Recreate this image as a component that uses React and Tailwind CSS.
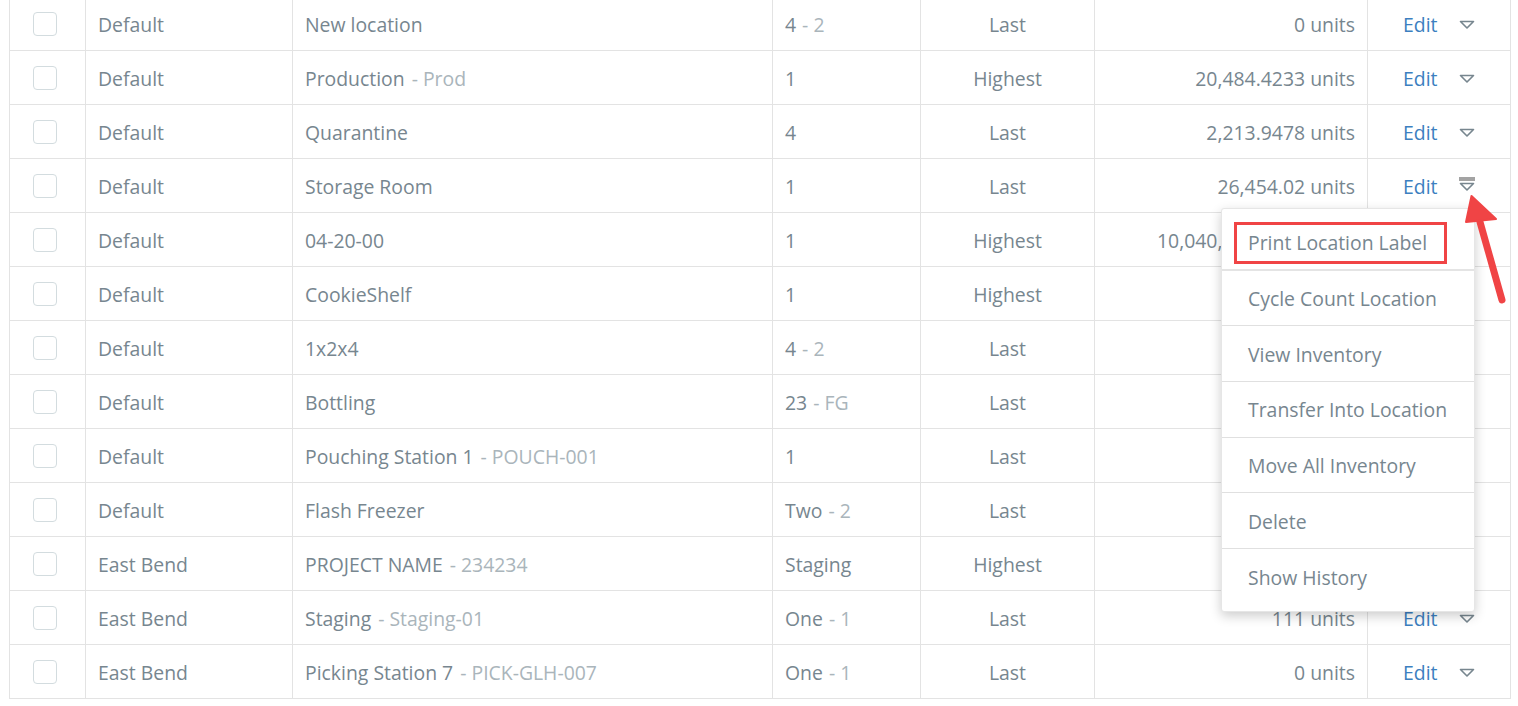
import React from 'react'

const rows = [
  { site: 'Default', name: 'New location', level: '4', sub: '2', pick: 'Last', qty: '0 units' },
  { site: 'Default', name: 'Production', code: 'Prod', level: '1', pick: 'Highest', qty: '20,484.4233 units' },
  { site: 'Default', name: 'Quarantine', level: '4', pick: 'Last', qty: '2,213.9478 units' },
  { site: 'Default', name: 'Storage Room', level: '1', pick: 'Last', qty: '26,454.02 units', active: true },
  { site: 'Default', name: '04-20-00', level: '1', pick: 'Highest', qty: '10,040,112.5531 units' },
  { site: 'Default', name: 'CookieShelf', level: '1', pick: 'Highest', qty: '312 units' },
  { site: 'Default', name: '1x2x4', level: '4', sub: '2', pick: 'Last', qty: '0 units' },
  { site: 'Default', name: 'Bottling', level: '23', sub: 'FG', pick: 'Last', qty: '48 units' },
  { site: 'Default', name: 'Pouching Station 1', code: 'POUCH-001', level: '1', pick: 'Last', qty: '0 units' },
  { site: 'Default', name: 'Flash Freezer', level: 'Two', sub: '2', pick: 'Last', qty: '0 units' },
  { site: 'East Bend', name: 'PROJECT NAME', code: '234234', level: 'Staging', pick: 'Highest', qty: '0 units' },
  { site: 'East Bend', name: 'Staging', code: 'Staging-01', level: 'One', sub: '1', pick: 'Last', qty: '111 units' },
  { site: 'East Bend', name: 'Picking Station 7', code: 'PICK-GLH-007', level: 'One', sub: '1', pick: 'Last', qty: '0 units' },
]

const menuItems = [
  'Print Location Label',
  'Cycle Count Location',
  'View Inventory',
  'Transfer Into Location',
  'Move All Inventory',
  'Delete',
  'Show History',
]

function Caret({ active }) {
  return (
    <div className="relative flex h-[14px] w-[16px] items-end">
      {active && <div className="absolute left-0 top-[-1px] h-[4px] w-[16px] bg-[#a3a3a3]"></div>}
      <svg width="16" height="10" viewBox="0 0 16 10">
        <polygon points="1.5,1.5 14.5,1.5 8,8" fill="none" stroke="#77868f" strokeWidth="1.6" strokeLinejoin="round" />
      </svg>
    </div>
  )
}

export default function App() {
  return (
    <div className="relative h-[706px] w-[1518px] overflow-hidden bg-white font-['Open_Sans',sans-serif] text-[19.4px] text-[#77868f]">
      {/* Table */}
      <div className="ml-[9px] mt-[-3px] w-[1502px] border-l border-[#e3e3e3]">
        {rows.map((r, i) => (
          <div key={i} className="grid h-[54px] grid-cols-[76px_207px_480px_148px_174px_273px_143px] border-b border-[#e3e3e3]">
            <div className="flex items-center border-r border-[#e3e3e3] pl-[23px]">
              <div className="h-[24px] w-[24px] rounded-[4px] border border-[#d3dcdf] bg-white"></div>
            </div>
            <div className="flex items-center border-r border-[#e3e3e3] pl-[12px] pt-[2px]">{r.site}</div>
            <div className="flex items-center whitespace-nowrap border-r border-[#e3e3e3] pl-[12px] pt-[2px]">
              {r.name}
              {r.code && <span className="ml-[7px] text-[#aab5bb]">- {r.code}</span>}
            </div>
            <div className="flex items-center whitespace-nowrap border-r border-[#e3e3e3] pl-[12px] pt-[2px]">
              {r.level}
              {r.sub && <span className="ml-[6px] text-[#aab5bb]">- {r.sub}</span>}
            </div>
            <div className="flex items-center justify-center border-r border-[#e3e3e3] pt-[2px]">{r.pick}</div>
            <div className="flex items-center justify-end whitespace-nowrap border-r border-[#e3e3e3] pr-[12px] pt-[2px]">{r.qty}</div>
            <div className="flex items-center border-r border-[#e3e3e3] pl-[35px] pt-[2px]">
              <span className="text-[#3c7fc0]">Edit</span>
              <div className="ml-[22px] mt-[-4px]">
                <Caret active={r.active} />
              </div>
            </div>
          </div>
        ))}
      </div>

      {/* Dropdown menu */}
      <div className="absolute left-[1221px] top-[208px] w-[254px] rounded-[3px] border border-[#e6e6e6] bg-white py-[6px] shadow-[0_4px_12px_rgba(0,0,0,0.2)]">
        {menuItems.map((item, i) => (
          <div
            key={item}
            className={`flex h-[55.7px] items-center whitespace-nowrap pl-[26px] pt-[1px] ${i < menuItems.length - 1 ? (i === 0 ? 'border-b-2 border-[#e4e4e4]' : 'border-b border-[#e0e0e0]') : ''}`}
          >
            {item}
          </div>
        ))}
      </div>

      {/* Highlight box */}
      <div className="absolute left-[1234px] top-[222px] h-[42px] w-[213px] border-[3px] border-[#f04445]"></div>

      {/* Arrow */}
      <svg className="absolute left-[1460px] top-[190px]" width="58" height="125" viewBox="0 0 58 125">
        <line x1="42" y1="110" x2="20" y2="32" stroke="#f04445" strokeWidth="7" strokeLinecap="round" />
        <polygon points="11.5,6 6,32 36,29" fill="#f04445" stroke="#f04445" strokeWidth="2" strokeLinejoin="round" />
      </svg>
    </div>
  )
}
